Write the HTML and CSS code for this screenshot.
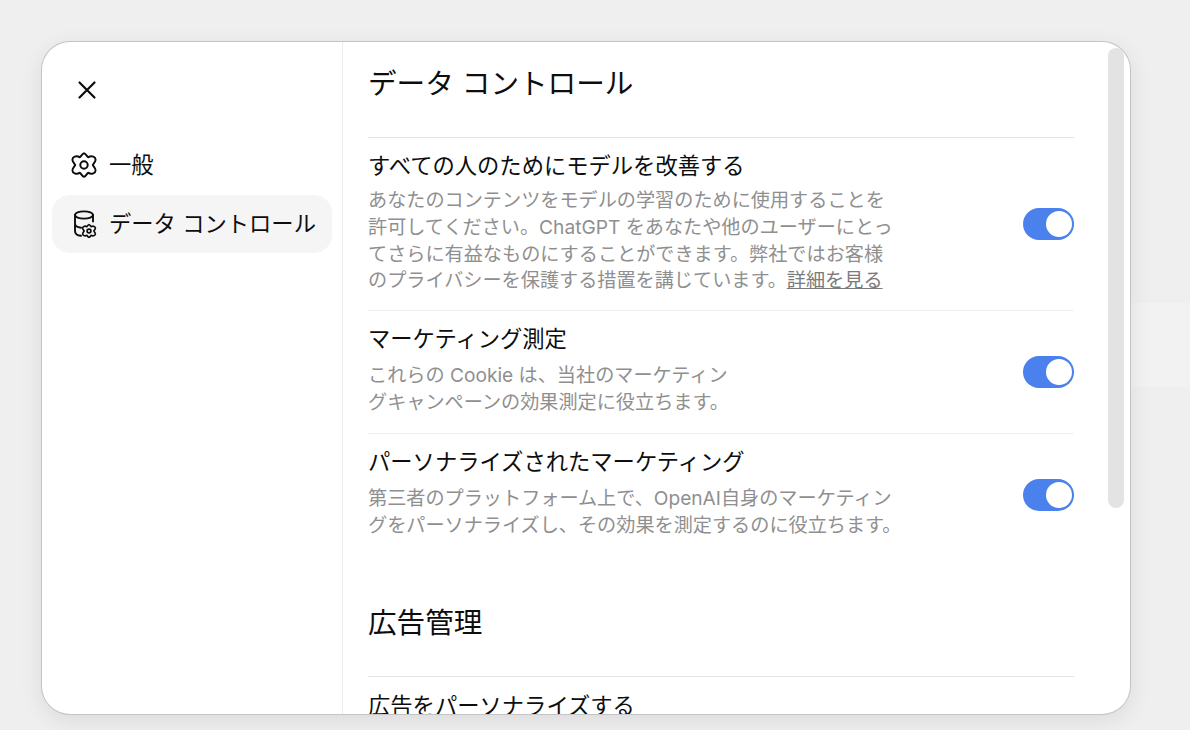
FILE: index.html
```html
<!DOCTYPE html>
<html lang="ja">
<head>
<meta charset="utf-8">
<title>データ コントロール</title>
<link rel="stylesheet" href="styles.css">
</head>
<body>
<div class="backdrop-band"></div>
<div class="modal">
  <aside class="sidebar">
    <button class="close" aria-label="閉じる">
      <svg width="24" height="24" viewBox="0 0 24 24" fill="none" stroke="#0d0d0d" stroke-width="2.2" stroke-linecap="round"><path d="M4.5 4.5 19.5 19.5M19.5 4.5 4.5 19.5"/></svg>
    </button>
    <nav class="nav">
      <a class="nav-item">
        <svg class="nav-icon" width="26" height="26" viewBox="0 0 26 26" fill="none" stroke="#0d0d0d" stroke-width="1.9" stroke-linejoin="round"><path d="M17.500 5.200C20 3 25.500 4.800 24.400 8.600C24.100 10 22.500 11.500 21.800 13C22.500 14.500 24.100 16 24.400 17.400C25.500 21.200 20 23 17.500 20.800C16 20.900 14.800 24.800 13 24.800C11.200 24.800 10 20.900 8.500 20.800C6 23 .5 21.200 1.600 17.400C1.900 16 3.500 14.500 4.200 13C3.500 11.500 1.900 10 1.600 8.600C.5 4.800 6 3 8.500 5.200C10 5.100 11.200 1.200 13 1.200C14.800 1.200 16 5.100 17.500 5.200Z"/><circle cx="13" cy="13" r="3.700" stroke-width="2"/></svg>
        <span class="nav-label">一般</span>
      </a>
      <a class="nav-item active">
        <svg class="nav-icon" width="26" height="28" viewBox="0 0 26 28" fill="none" stroke="#0d0d0d" stroke-width="1.9" stroke-linecap="round" stroke-linejoin="round"><ellipse cx="13" cy="5" rx="9" ry="3.600"/><path d="M4 5v16c0 2.800 2.600 4.500 6 4.800M22 5v6.500M4 13.500c0 2.200 2.500 3.800 6 4.200"/><g transform="translate(10.850 13.850) scale(.55)"><path stroke-width="3" d="M17.500 5.200C20 3 25.500 4.800 24.400 8.600C24.100 10 22.500 11.500 21.800 13C22.500 14.500 24.100 16 24.400 17.400C25.500 21.200 20 23 17.500 20.800C16 20.900 14.800 24.800 13 24.800C11.200 24.800 10 20.900 8.500 20.800C6 23 .5 21.200 1.600 17.400C1.900 16 3.500 14.500 4.200 13C3.500 11.500 1.900 10 1.600 8.600C.5 4.800 6 3 8.500 5.200C10 5.100 11.200 1.200 13 1.200C14.800 1.200 16 5.100 17.500 5.200Z"/><circle cx="13" cy="13" r="3.500" stroke-width="3"/></g></svg>
        <span class="nav-label">データ コントロール</span>
      </a>
    </nav>
  </aside>
  <main class="content">
    <h1 class="section-title">データ コントロール</h1>
    <section class="rows">
      <div class="row row-first">
        <div class="row-text">
          <h2>すべての人のためにモデルを改善する</h2>
          <p>あなたのコンテンツをモデルの学習のために使用することを<br>許可してください。ChatGPT をあなたや他のユーザーにとっ<br>てさらに有益なものにすることができます。弊社ではお客様<br>のプライバシーを保護する措置を講じています。<a class="link">詳細を見る</a></p>
        </div>
        <div class="toggle"><span class="knob"></span></div>
      </div>
      <div class="row row-second">
        <div class="row-text">
          <h2>マーケティング測定</h2>
          <p>これらの Cookie は、当社のマーケティン<br>グキャンペーンの効果測定に役立ちます。</p>
        </div>
        <div class="toggle"><span class="knob"></span></div>
      </div>
      <div class="row row-third">
        <div class="row-text">
          <h2>パーソナライズされたマーケティング</h2>
          <p>第三者のプラットフォーム上で、OpenAI自身のマーケティン<br>グをパーソナライズし、その効果を測定するのに役立ちます。</p>
        </div>
        <div class="toggle"><span class="knob"></span></div>
      </div>
    </section>
    <h1 class="section-title second">広告管理</h1>
    <section class="rows">
      <div class="row row-ads">
        <div class="row-text">
          <h2>広告をパーソナライズする</h2>
        </div>
      </div>
    </section>
  </main>
  <div class="scroll-thumb"></div>
</div>
</body>
</html>
```
FILE: styles.css
```css
* { box-sizing: border-box; }
html, body { height: 100%; }
body {
  margin: 0;
  height: 730px;
  overflow: hidden;
  background: #efefef;
  padding: 42px 60px 16px 42px;
  font-family: "Inter", "Noto Sans CJK JP", sans-serif;
  color: #0d0d0d;
  position: relative;
}
.backdrop-band {
  position: absolute;
  right: 0;
  top: 303px;
  width: 70px;
  height: 84px;
  background: #f2f2f2;
}
.modal {
  position: relative;
  width: 1088px;
  height: 672px;
  background: #fff;
  border-radius: 28px;
  box-shadow: 0 0 0 1px #c4c4c4, 0 6px 24px rgba(0,0,0,.09);
  display: flex;
  overflow: hidden;
}
.sidebar {
  width: 301px;
  flex: none;
  border-right: 1px solid #ececec;
  padding: 32px 10px 0;
}
.close {
  display: flex;
  align-items: center;
  justify-content: center;
  width: 32px;
  height: 32px;
  margin-left: 19px;
  padding: 0;
  border: 0;
  background: none;
}
.nav {
  margin-top: 30px;
  display: flex;
  flex-direction: column;
  gap: 1px;
}
.nav-item {
  display: flex;
  align-items: center;
  gap: 12px;
  height: 58px;
  padding-left: 19px;
  border-radius: 18px;
  font-size: 22.300px;
  white-space: nowrap;
  width: 280px;
}
.nav-label { padding-bottom: 4px; }
.nav-item.active { background: #f5f5f5; }
.nav-icon { flex: none; }
.content {
  flex: 1;
  min-width: 0;
  padding: 0 56px 0 25px;
  overflow: hidden;
}
.section-title {
  margin: 0;
  font-size: 28.600px;
  font-weight: 400;
  line-height: 40px;
  padding-top: 22px;
  height: 96px;
  white-space: nowrap;
  border-bottom: 1px solid #e3e3e3;
}
.section-title.second {
  padding-top: 69px;
  height: 143px;
}
.row {
  display: flex;
  justify-content: space-between;
  align-items: flex-start;
  border-bottom: 1px solid #f0f0f0;
}
.row:last-child { border-bottom: 0; }
.row-text { min-width: 0; padding-top: 12px; }
.row-first { height: 173px; }
.row-first .toggle { margin-top: 70px; }
.row-second { height: 123px; }
.row-second .toggle { margin-top: 45px; }
.row-third { height: 100px; border-bottom: 0; }
.row-third .toggle { margin-top: 45px; }
.row-ads .row-text { padding-top: 13px; }
.row-text h2 {
  margin: 0 0 7px;
  font-size: 22.300px;
  line-height: 32px;
  font-weight: 400;
  white-space: nowrap;
}
.row-first .row-text h2 { margin-bottom: 5px; }
.row-text p {
  margin: 0;
  font-size: 19.150px;
  line-height: 26.800px;
  color: #8f8f8f;
  white-space: nowrap;
}
.link { color: #7b7b7b; text-decoration: underline; }
.toggle {
  flex: none;
  width: 51px;
  height: 32px;
  border-radius: 16px;
  background: #4a81ec;
  display: flex;
  align-items: center;
  justify-content: flex-end;
  padding-right: 2px;
}
.knob {
  display: block;
  width: 26px;
  height: 26px;
  border-radius: 50%;
  background: #fff;
}
.scroll-thumb {
  position: absolute;
  top: 6px;
  right: 6px;
  width: 16px;
  height: 460px;
  border-radius: 8px;
  background: #e3e3e3;
}
```
